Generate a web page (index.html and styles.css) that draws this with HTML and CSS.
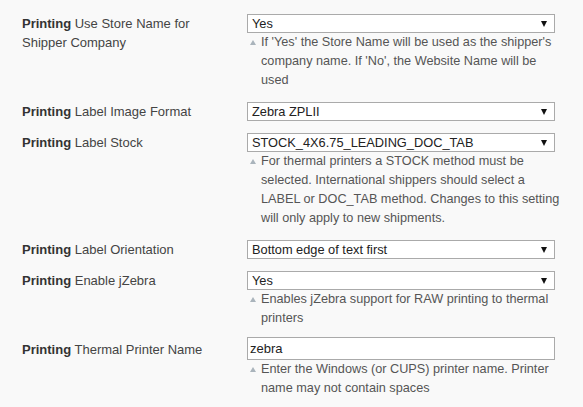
FILE: index.html
```html
<!DOCTYPE html>
<html>
<head>
<meta charset="utf-8">
<link rel="stylesheet" href="styles.css">
</head>
<body>
<div class="form">
  <div class="row">
    <div class="label"><b>Printing</b> Use Store Name for Shipper Company</div>
    <div class="value">
      <div class="sel"><select><option>Yes</option></select><span class="arrow"></span></div>
      <p class="note">If 'Yes' the Store Name will be used as the shipper's company name. If 'No', the Website Name will be used</p>
    </div>
  </div>
  <div class="row">
    <div class="label"><b>Printing</b> Label Image Format</div>
    <div class="value">
      <div class="sel"><select><option>Zebra ZPLII</option></select><span class="arrow"></span></div>
    </div>
  </div>
  <div class="row">
    <div class="label"><b>Printing</b> Label Stock</div>
    <div class="value">
      <div class="sel"><select><option>STOCK_4X6.75_LEADING_DOC_TAB</option></select><span class="arrow"></span></div>
      <p class="note">For thermal printers a STOCK method must be selected. International shippers should select a LABEL or DOC_TAB method. Changes to this setting will only apply to new shipments.</p>
    </div>
  </div>
  <div class="row">
    <div class="label"><b>Printing</b> Label Orientation</div>
    <div class="value">
      <div class="sel"><select><option>Bottom edge of text first</option></select><span class="arrow"></span></div>
    </div>
  </div>
  <div class="row">
    <div class="label"><b>Printing</b> Enable jZebra</div>
    <div class="value">
      <div class="sel"><select><option>Yes</option></select><span class="arrow"></span></div>
      <p class="note">Enables jZebra support for RAW printing to thermal printers</p>
    </div>
  </div>
  <div class="row">
    <div class="label"><b>Printing</b> Thermal Printer Name</div>
    <div class="value">
      <input class="text" type="text" value="zebra">
      <p class="note">Enter the Windows (or CUPS) printer name. Printer name may not contain spaces</p>
    </div>
  </div>
</div>
</body>
</html>
```
FILE: styles.css
```css
html, body {
  margin: 0;
  padding: 0;
  background: #f9f9f9;
}
body {
  font-family: "Liberation Sans", Arial, sans-serif;
  font-size: 13px;
  color: #444;
}
.form {
  padding: 8px 0 0 22px;
  display: flex;
  flex-direction: column;
}
.row {
  display: grid;
  grid-template-columns: 225px 308px;
  padding: 6px 0;
}
.label {
  line-height: 19px;
  color: #444;
  padding-right: 30px;
}
.label b {
  color: #333;
}
.value {
  display: flex;
  flex-direction: column;
}
.sel {
  position: relative;
  height: 19px;
}
.sel select {
  appearance: none;
  -webkit-appearance: none;
  width: 308px;
  height: 19px;
  margin: 0;
  padding: 0 0 0 4px;
  border: 1px solid #aaa;
  border-radius: 0;
  background: #fff;
  font-family: "Liberation Sans", Arial, sans-serif;
  font-size: 12.8px;
  color: #222;
  box-sizing: border-box;
  display: block;
}
.arrow {
  position: absolute;
  right: 8px;
  top: 7px;
  width: 0;
  height: 0;
  border-left: 3px solid transparent;
  border-right: 3px solid transparent;
  border-top: 6px solid #111;
}
.text {
  width: 308px;
  height: 23px;
  margin: -3px 0 0;
  padding: 0 2px;
  border: 1px solid #aaa;
  background: #fff;
  font-family: "Liberation Sans", Arial, sans-serif;
  font-size: 13px;
  color: #222;
  box-sizing: border-box;
  display: block;
}
.note {
  position: relative;
  margin: 0 -8px 0 0;
  padding-left: 14px;
  line-height: 19px;
  font-size: 12.7px;
  color: #555;
}
.note::before {
  content: "";
  position: absolute;
  left: 3px;
  top: 7px;
  width: 0;
  height: 0;
  border-left: 3px solid transparent;
  border-right: 3px solid transparent;
  border-bottom: 5px solid #aab4bc;
}
```
